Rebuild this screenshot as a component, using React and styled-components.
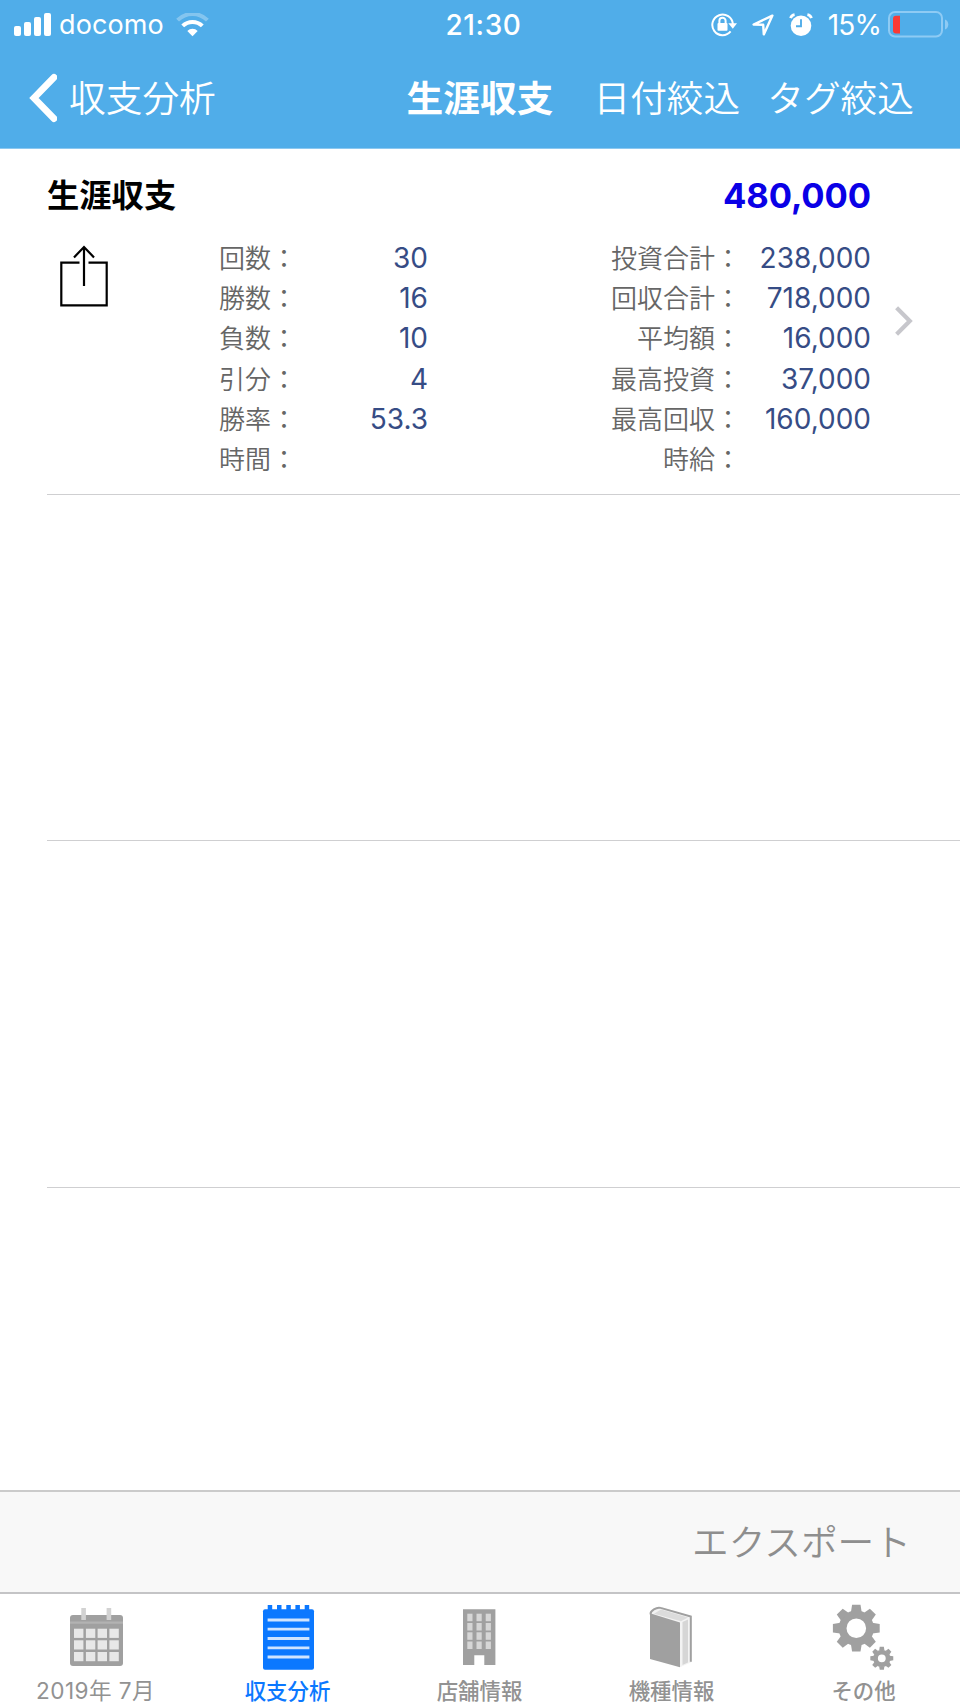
import React from "react";
import styled, { createGlobalStyle } from "styled-components";

const GlobalStyle = createGlobalStyle`
  * {
    box-sizing: border-box;
  }
  body {
    margin: 0;
    background: #fff;
    font-family: Inter, "Noto Sans CJK JP", sans-serif;
  }
  svg {
    display: block;
    flex: none;
  }
`;

const Screen = styled.div`
  display: flex;
  flex-direction: column;
  width: 960px;
  height: 1707px;
  background: #fff;
`;

const Header = styled.header`
  height: 149px;
  background: #50ade9;
  color: #fff;
  border-bottom: 1px solid #8cc8f0;
`;

const StatusBar = styled.div`
  display: grid;
  grid-template-columns: 1fr auto 1fr;
  align-items: center;
  height: 49px;
  padding: 0 11px 0 14px;
  font-size: 27px;
  line-height: 32px;
`;

const StatusGroup = styled.div`
  display: flex;
  align-items: center;
  justify-content: ${(props) => (props.$end ? "flex-end" : "flex-start")};
`;

const StatusIcons = styled.div`
  display: flex;
  align-items: center;
  gap: 15px;
`;

const Carrier = styled.span`
  margin: 0 12px 0 7px;
  letter-spacing: 0.1px;
`;

const Clock = styled.span`
  font-size: 28px;
  font-weight: 500;
  letter-spacing: 0.6px;
  padding-left: 4px;
`;

const Percent = styled.span`
  margin: 0 7px 0 15px;
  font-size: 28px;
  letter-spacing: -0.9px;
`;

const NavBar = styled.nav`
  display: grid;
  grid-template-columns: 1fr auto 1fr;
  align-items: center;
  height: 99px;
  padding: 0 46px 5px 28px;
  font-family: "Noto Sans CJK JP", sans-serif;
  font-size: 36.7px;
  line-height: 50px;
  font-weight: 350;
`;

const NavButton = styled.button`
  display: flex;
  align-items: center;
  gap: 12px;
  padding: 0;
  border: 0;
  background: none;
  color: inherit;
  font: inherit;
  white-space: nowrap;

  svg {
    margin-top: 3px;
  }
`;

const NavTitle = styled.h1`
  margin: 0 0 0 18px;
  font-size: inherit;
  font-weight: 700;
`;

const NavActions = styled.div`
  display: flex;
  justify-content: flex-end;
  gap: 27px;
`;

const List = styled.main`
  flex: 1;
  padding-left: 47px;
  overflow: hidden;
`;

const Cell = styled.section`
  height: 346.2px;
  border-bottom: 1px solid #cfcfd1;
`;

const CellHeader = styled.div`
  display: flex;
  align-items: center;
  justify-content: space-between;
  height: 92px;
  padding-right: 89px;
`;

const CellTitle = styled.h2`
  margin: 0 0 4px;
  font-family: "Noto Sans CJK JP", sans-serif;
  font-size: 32.3px;
  line-height: 44px;
  font-weight: 700;
  color: #000;
`;

const Total = styled.span`
  font-size: 34.6px;
  font-weight: 700;
  letter-spacing: -0.1px;
  color: #0a00e6;
`;

const CellBody = styled.div`
  display: grid;
  grid-template-columns: 170px 211px 182px 261px 1fr;
  height: 241px;
  margin-top: -3px;
`;

const ShareButton = styled.button`
  align-self: start;
  padding: 7px 0 0 13px;
  border: 0;
  background: none;
`;

const Stats = styled.dl`
  grid-column: ${(props) => props.$column};
  margin: 0;
`;

const Stat = styled.div`
  display: flex;
  justify-content: space-between;
  align-items: center;
  height: 40.2px;
`;

const StatLabel = styled.dt`
  width: ${(props) => (props.$wide ? "131px" : "80px")};
  margin-bottom: 2px;
  text-align: right;
  font-family: "Noto Sans CJK JP", sans-serif;
  font-size: 26px;
  font-weight: 350;
  line-height: 38px;
  white-space: nowrap;
  color: #666;
`;

const StatValue = styled.dd`
  margin: 0;
  font-size: 28px;
  color: #364c85;
`;

const Disclosure = styled.div`
  padding: 68px 0 0 24px;
`;

const Toolbar = styled.div`
  display: flex;
  align-items: center;
  justify-content: flex-end;
  height: 102px;
  padding: 0 49px 4px 0;
  border-top: 2px solid #cbcbcb;
  background: #f8f8f8;
`;

const ExportButton = styled.button`
  padding: 0;
  border: 0;
  background: none;
  font-family: "Noto Sans CJK JP", sans-serif;
  font-size: 36.7px;
  line-height: 50px;
  font-weight: 350;
  color: #8e8e8e;
`;

const TabBar = styled.nav`
  display: grid;
  grid-template-columns: repeat(5, 1fr);
  height: 115px;
  border-top: 2px solid #c4c4c6;
  background: #fff;
`;

const Tab = styled.a`
  display: flex;
  flex-direction: column;
  align-items: center;
  padding-top: 6px;
  color: ${(props) => (props.$active ? "#0b78ff" : "#929292")};
`;

const TabLabel = styled.span`
  margin: 5px 1px 0 0;
  font-size: ${(props) => (props.$date ? "22.6px" : "21.4px")};
  letter-spacing: ${(props) => (props.$date ? "0.4px" : "0")};
  line-height: 32px;
  font-weight: ${(props) => (props.$date ? 400 : 500)};
  white-space: pre;
`;

const SignalIcon = () => (
  <svg width="38" height="24" viewBox="0 0 38 24" fill="#fff">
    <rect x="0" y="13" width="7" height="10" rx="2" />
    <rect x="10" y="9" width="7" height="14" rx="2" />
    <rect x="20" y="4" width="7" height="19" rx="2" />
    <rect x="30" y="0" width="7" height="23" rx="2" />
  </svg>
);

const WifiIcon = () => (
  <svg width="33" height="24" viewBox="0 0 33 24" fill="none" stroke="#fff" strokeWidth="4">
    <path d="M1.6 7.2a21 21 0 0 1 29.8 0" opacity=".3" />
    <path d="M6.7 12.9a14 14 0 0 1 19.6 0" />
    <path d="M16.5 23.2l-5.2-5.3a7.4 7.4 0 0 1 10.4 0z" fill="#fff" stroke="none" />
  </svg>
);

const RotationLockIcon = () => (
  <svg width="26" height="24" viewBox="0 0 26 24" fill="none" stroke="#fff" strokeWidth="2">
    <path d="M19.6 18.4A10.3 10.3 0 1 1 21.9 11" />
    <path d="M17.3 10.2H26l-4.2 5.6z" fill="#fff" stroke="none" />
    <rect x="6.5" y="10" width="10" height="7.8" rx="1" fill="#fff" stroke="none" />
    <path d="M8.4 10.5V7.8a3.1 3.1 0 0 1 6.2 0v2.7" />
  </svg>
);

const LocationIcon = () => (
  <svg width="22" height="22" viewBox="0 0 22 22" fill="none" stroke="#fff" strokeWidth="2.4" strokeLinejoin="round">
    <path d="M20.4 1.6L1.6 10.5l9.6.3.6 9.6z" />
  </svg>
);

const AlarmIcon = () => (
  <svg width="24" height="24" viewBox="0 0 24 24" fill="#fff">
    <circle cx="12" cy="12.7" r="10.3" />
    <path d="M1.6 5.2A5 5 0 0 1 5.6 1.6M22.4 5.2a5 5 0 0 0-4-3.6" stroke="#fff" strokeWidth="2.8" fill="none" />
    <path d="M12 6.3v7H7" stroke="#50ade9" strokeWidth="1.9" fill="none" />
  </svg>
);

const BatteryIcon = () => (
  <svg width="61" height="27" viewBox="0 0 61 27" fill="none">
    <rect x="1" y="1" width="53" height="24.5" rx="6" stroke="#8ecbf4" strokeWidth="2" />
    <path d="M57 8.5c4.4 1.3 4.4 8.7 0 10z" fill="#8ecbf4" />
    <path d="M8 4.8h4v17.6H8a3 3 0 0 1-3-3V7.8a3 3 0 0 1 3-3z" fill="#f93a35" />
  </svg>
);

const BackIcon = () => (
  <svg width="29" height="50" viewBox="0 0 29 50" fill="none" stroke="#fff" strokeWidth="6.8" strokeLinecap="round" strokeLinejoin="miter">
    <path d="M26 4.4L6 25l20 20.6" />
  </svg>
);

const ShareIcon = () => (
  <svg width="48" height="62" viewBox="0 0 48 62" fill="none" stroke="#000" strokeWidth="2.2">
    <path d="M19.5 17.7H1.3v42.6h45.4V17.7h-18.2" />
    <path d="M24 41V2M14 12.4L24 2l10 10.4" />
  </svg>
);

const ChevronIcon = () => (
  <svg width="18" height="30" viewBox="0 0 18 30" fill="none" stroke="#c7c7cc" strokeWidth="4.2">
    <path d="M1.6 1.8L14.8 15 1.6 28.2" />
  </svg>
);

const CalendarIcon = () => (
  <svg width="80" height="70" viewBox="0 0 80 70">
    <rect x="14" y="15" width="53" height="51" rx="3" fill="#a0a0a0" />
    <rect x="14" y="21.5" width="53" height="2.2" fill="#b2b2b2" />
    <rect x="25.3" y="8" width="4.6" height="12" fill="#d2d2d2" />
    <rect x="50.6" y="8" width="4.6" height="12" fill="#d2d2d2" />
    {[28.7, 40.3, 52].map((y) =>
      [18, 29.9, 41.6, 53.4].map((x) => (
        <rect key={`${x}-${y}`} x={x} y={y} width="9.4" height="9.2" fill="#e8e8e8" />
      ))
    )}
  </svg>
);

const NotepadIcon = () => (
  <svg width="80" height="70" viewBox="0 0 80 70">
    <rect x="15" y="9.3" width="51" height="60.4" rx="2" fill="#0b78ff" />
    {[19.7, 29, 38.3, 47.4, 56.7].map((x) => (
      <rect key={x} x={x} y="5" width="4.5" height="5" fill="#0b78ff" />
    ))}
    {[20, 29.2, 38.5, 47.8, 57].map((y) => (
      <path key={y} d={`M19.6 ${y}h41.8`} stroke="#cfe4ff" strokeWidth="2.8" />
    ))}
  </svg>
);

const BuildingIcon = () => (
  <svg width="80" height="70" viewBox="0 0 80 70">
    <path d="M23 9.3h32.4V65H44.3v-9.7h-10V65H23z" fill="#a0a0a0" />
    {[13.7, 23, 32.3, 41.5].map((y) =>
      [27.3, 36.5, 45.7].map((x) => (
        <rect key={`${x}-${y}`} x={x} y={y} width="5.2" height="7.5" fill="#d6d6d6" />
      ))
    )}
  </svg>
);

const BookIcon = () => (
  <svg width="80" height="70" viewBox="0 0 80 70">
    <path d="M18 13.3L28 7l31.7 9v46l-11.7 5.3z" fill="#f3f3f3" />
    <path d="M50.5 22l5.5-2.5v43L50.5 65z" fill="#d6d6d6" />
    <path d="M22 13.7l7-4.2 27 7.9-7 3.8z" fill="#dcdcdc" />
    <path d="M18.6 14.2c-.6-3 6-7.6 10-6.3l30.2 8.6v45.3" fill="none" stroke="#a0a0a0" strokeWidth="2" />
    <path d="M18 13.3l30 9.2v44.8L18 59z" fill="#a0a0a0" />
  </svg>
);

const Gear = ({ x, y, scale = 1, hole }) => (
  <g transform={`translate(${x} ${y}) scale(${scale})`}>
    <circle r={(17.6 + hole) / 2} fill="none" stroke="#a0a0a0" strokeWidth={17.6 - hole} />
    {[0, 45, 90, 135, 180, 225, 270, 315].map((angle) => (
      <path key={angle} d="M-5.4-16l1.2-7.4h8.4L5.4-16z" fill="#a0a0a0" transform={`rotate(${angle})`} />
    ))}
  </g>
);

const GearsIcon = () => (
  <svg width="80" height="70" viewBox="0 0 80 70">
    <Gear x={32.3} y={28.2} hole={9.8} />
    <Gear x={57.8} y={58.3} scale={0.49} hole={8} />
  </svg>
);

const counts = [
  { label: "回数：", value: "30" },
  { label: "勝数：", value: "16" },
  { label: "負数：", value: "10" },
  { label: "引分：", value: "4" },
  { label: "勝率：", value: "53.3" },
  { label: "時間：", value: "" },
];

const amounts = [
  { label: "投資合計：", value: "238,000" },
  { label: "回収合計：", value: "718,000" },
  { label: "平均額：", value: "16,000" },
  { label: "最高投資：", value: "37,000" },
  { label: "最高回収：", value: "160,000" },
  { label: "時給：", value: "" },
];

const tabs = [
  { label: "2019年 7月", Icon: CalendarIcon, date: true },
  { label: "収支分析", Icon: NotepadIcon, active: true },
  { label: "店舗情報", Icon: BuildingIcon },
  { label: "機種情報", Icon: BookIcon },
  { label: "その他", Icon: GearsIcon },
];

const StatList = ({ items, column, wide }) => (
  <Stats $column={column}>
    {items.map((item) => (
      <Stat key={item.label}>
        <StatLabel $wide={wide}>{item.label}</StatLabel>
        <StatValue>{item.value}</StatValue>
      </Stat>
    ))}
  </Stats>
);

export default function App() {
  return (
    <Screen>
      <GlobalStyle />
      <Header>
        <StatusBar>
          <StatusGroup>
            <SignalIcon />
            <Carrier>docomo</Carrier>
            <WifiIcon />
          </StatusGroup>
          <Clock>21:30</Clock>
          <StatusGroup $end>
            <StatusIcons>
              <RotationLockIcon />
              <LocationIcon />
              <AlarmIcon />
            </StatusIcons>
            <Percent>15%</Percent>
            <BatteryIcon />
          </StatusGroup>
        </StatusBar>
        <NavBar>
          <NavButton>
            <BackIcon />
            収支分析
          </NavButton>
          <NavTitle>生涯収支</NavTitle>
          <NavActions>
            <NavButton>日付絞込</NavButton>
            <NavButton>タグ絞込</NavButton>
          </NavActions>
        </NavBar>
      </Header>

      <List>
        <Cell>
          <CellHeader>
            <CellTitle>生涯収支</CellTitle>
            <Total>480,000</Total>
          </CellHeader>
          <CellBody>
            <ShareButton aria-label="共有">
              <ShareIcon />
            </ShareButton>
            <StatList items={counts} column={2} />
            <StatList items={amounts} column={4} wide />
            <Disclosure>
              <ChevronIcon />
            </Disclosure>
          </CellBody>
        </Cell>
        <Cell />
        <Cell />
      </List>

      <Toolbar>
        <ExportButton>エクスポート</ExportButton>
      </Toolbar>
      <TabBar>
        {tabs.map(({ label, Icon, active, date }) => (
          <Tab key={label} $active={active}>
            <Icon />
            <TabLabel $date={date}>{label}</TabLabel>
          </Tab>
        ))}
      </TabBar>
    </Screen>
  );
}
